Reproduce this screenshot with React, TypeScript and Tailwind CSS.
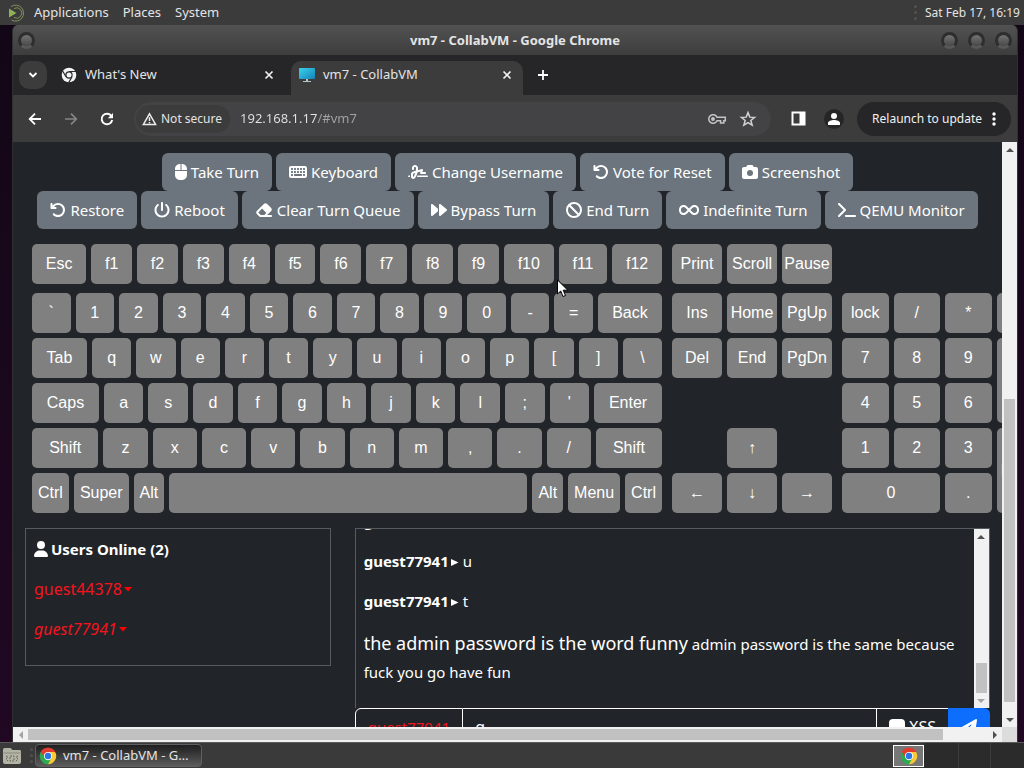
import React from "react";
import {
  FaArrowRotateLeft,
  FaBan,
  FaCamera,
  FaComputerMouse,
  FaEraser,
  FaForward,
  FaInfinity,
  FaKeyboard,
  FaPaperPlane,
  FaPowerOff,
  FaSignature,
  FaTerminal,
  FaUser,
} from "react-icons/fa6";

function MateLogo() {
  return (
    <svg width="20" height="20" viewBox="0 0 20 20" fill="none" aria-hidden="true">
      <path d="M2 5.5v9l7.5-4.5z" fill="#8fb054" />
      <path d="M4 3.6A8 8 0 1 1 4.5 17" stroke="#7f9259" strokeWidth="1" />
      <path d="M7 5.5a5.2 5.2 0 1 1 0 9" stroke="#7f9259" strokeWidth="1" />
    </svg>
  );
}

function ChromeColor() {
  return (
    <svg width="18" height="18" viewBox="0 0 48 48" aria-hidden="true">
      <path d="M24 24 4.950 13A22 22 0 0 1 43.050 13z" fill="#e33b2e" />
      <path d="M24 24 43.050 13A22 22 0 0 1 24 46z" fill="#fcc934" />
      <path d="M24 24 24 46A22 22 0 0 1 4.950 13z" fill="#2da94f" />
      <path d="M24 13H43.050L34 29.500z" fill="#fcc934" />
      <path d="M24 13H43.050A22 22 0 0 0 4.950 13L14.500 29.500A11 11 0 0 1 24 13z" fill="#e33b2e" />
      <path d="M33.500 29.500 24 46A22 22 0 0 1 4.950 13L14.500 29.500A11 11 0 0 0 33.500 29.500z" fill="#2da94f" />
      <circle cx="24" cy="24" r="11" fill="#fff" />
      <circle cx="24" cy="24" r="8.600" fill="#2b76e5" />
    </svg>
  );
}

function ChromeMono() {
  return (
    <svg width="16" height="16" viewBox="0 0 48 48" aria-hidden="true">
      <circle cx="24" cy="24" r="22" fill="#f1f3f4" />
      <circle cx="24" cy="24" r="11" fill="#29292b" />
      <circle cx="24" cy="24" r="7.500" fill="#f1f3f4" />
      <path d="M24 13.500H45M14.900 29.300 4.500 11.300M33.100 29.300 23 46.800" stroke="#29292b" strokeWidth="3.500" />
    </svg>
  );
}

function MonitorIcon() {
  return (
    <svg width="16" height="16" viewBox="0 0 16 16" aria-hidden="true">
      <defs>
        <linearGradient id="mon" x1="0" y1="0" x2="1" y2="1">
          <stop offset="0" stopColor="#3bd3ee" />
          <stop offset="1" stopColor="#1481b8" />
        </linearGradient>
      </defs>
      <rect x="0" y="1" width="16" height="11" rx="1" fill="url(#mon)" />
      <path d="M7 12h2v2h3v1H4v-1h3z" fill="#b8c4c8" />
    </svg>
  );
}

function Close() {
  return (
    <svg width="10" height="10" viewBox="0 0 10 10" aria-hidden="true">
      <path d="M1.500 1.500l7 7M8.500 1.500l-7 7" stroke="#f1f1f1" strokeWidth="1.700" />
    </svg>
  );
}

type Dir = "up" | "down" | "left" | "right";
const arrowPaths: Record<Dir, string> = {
  up: "M0 6 4 2l4 4z",
  down: "M0 2 4 6l4-4z",
  left: "M6 0 2 4l4 4z",
  right: "M2 0 6 4 2 8z",
};

function Arrow({ dir, color }: { dir: Dir; color: string }) {
  return (
    <span className="flex size-[15px] shrink-0 items-center justify-center">
      <svg width="8" height="8" viewBox="0 0 8 8" aria-hidden="true">
        <path d={arrowPaths[dir]} fill={color} />
      </svg>
    </span>
  );
}

function KeyButton({ label, className = "grow px-[5px]" }: { label: string; className?: string }) {
  return (
    <button
      aria-label={label === "" ? "Space" : undefined}
      className={`flex h-10 min-w-5 items-center justify-center rounded-[5px] bg-[#808080] text-center ${className}`}
    >
      {label}
    </button>
  );
}

const rows: string[][] = [
  ["Esc", "f1", "f2", "f3", "f4", "f5", "f6", "f7", "f8", "f9", "f10", "f11", "f12"],
  ["`", "1", "2", "3", "4", "5", "6", "7", "8", "9", "0", "-", "=", "Back"],
  ["Tab", "q", "w", "e", "r", "t", "y", "u", "i", "o", "p", "[", "]", "\\"],
  ["Caps", "a", "s", "d", "f", "g", "h", "j", "k", "l", ";", "'", "Enter"],
  ["Shift", "z", "x", "c", "v", "b", "n", "m", ",", ".", "/", "Shift"],
];

function Keyboard() {
  return (
    <div className="flex items-end gap-2.5 px-[7px] font-['Liberation_Sans',Arial,sans-serif] text-base leading-5 text-white">
      <div className="flex w-[630px] shrink-0 flex-col gap-[5px]">
        {rows.map((row, i) => (
          <div key={i} className={`flex gap-[5px] ${i === 0 ? "mb-1" : ""}`}>
            {row.map((k, j) => (
              <KeyButton key={j} label={k} className={k.length === 1 ? "w-5 grow" : "grow px-[5px]"} />
            ))}
          </div>
        ))}
        <div className="flex gap-[5px]">
          <KeyButton label="Ctrl" className="px-1.5" />
          <KeyButton label="Super" className="px-1.5" />
          <KeyButton label="Alt" className="px-1.5" />
          <KeyButton label="" className="grow" />
          <KeyButton label="Alt" className="px-1.5" />
          <KeyButton label="Menu" className="px-1.5" />
          <KeyButton label="Ctrl" className="px-1.5" />
        </div>
      </div>

      <div className="flex w-40 shrink-0 flex-col gap-[5px]">
        <div className="mb-1 grid grid-cols-3 gap-[5px]">
          <KeyButton label="Print" />
          <KeyButton label="Scroll" />
          <KeyButton label="Pause" className="" />
        </div>
        <div className="grid grid-cols-3 gap-[5px]">
          <KeyButton label="Ins" />
          <KeyButton label="Home" />
          <KeyButton label="PgUp" />
          <KeyButton label="Del" />
          <KeyButton label="End" />
          <KeyButton label="PgDn" />
        </div>
        <div className="mt-[45px] grid grid-cols-3 gap-[5px]">
          <KeyButton label="↑" className="col-start-2" />
          <KeyButton label="←" className="col-start-1" />
          <KeyButton label="↓" />
          <KeyButton label="→" />
        </div>
      </div>

      <div className="grid w-[201px] shrink-0 grid-cols-4 gap-[5px]">
        <KeyButton label="lock" />
        <KeyButton label="/" />
        <KeyButton label="*" />
        <KeyButton label="-" />
        <KeyButton label="7" />
        <KeyButton label="8" />
        <KeyButton label="9" />
        <KeyButton label="+" className="row-span-2 h-full" />
        <KeyButton label="4" />
        <KeyButton label="5" />
        <KeyButton label="6" />
        <KeyButton label="1" />
        <KeyButton label="2" />
        <KeyButton label="3" />
        <KeyButton label="Enter" className="row-span-2 h-full" />
        <KeyButton label="0" className="col-span-2" />
        <KeyButton label="." />
      </div>
    </div>
  );
}

type Action = { icon: React.ReactNode; label: string };

const actions: Action[][] = [
  [
    { icon: <FaComputerMouse className="h-4 w-3" />, label: "Take Turn" },
    { icon: <FaKeyboard className="h-4 w-[18px]" />, label: "Keyboard" },
    { icon: <FaSignature className="h-4 w-5" />, label: "Change Username" },
    { icon: <FaArrowRotateLeft className="size-4" />, label: "Vote for Reset" },
    { icon: <FaCamera className="size-4" />, label: "Screenshot" },
  ],
  [
    { icon: <FaArrowRotateLeft className="size-4" />, label: "Restore" },
    { icon: <FaPowerOff className="size-4" />, label: "Reboot" },
    { icon: <FaEraser className="h-4 w-[18px]" />, label: "Clear Turn Queue" },
    { icon: <FaForward className="size-4" />, label: "Bypass Turn" },
    { icon: <FaBan className="size-4" />, label: "End Turn" },
    { icon: <FaInfinity className="h-4 w-5" />, label: "Indefinite Turn" },
    { icon: <FaTerminal className="h-4 w-[18px]" />, label: "QEMU Monitor" },
  ],
];

function Toolbar() {
  return (
    <div className="flex flex-col">
      {actions.map((row, i) => (
        <div key={i} className="flex justify-center gap-1">
          {row.map((a) => (
            <button
              key={a.label}
              className="flex h-[38px] items-center gap-1 rounded-md bg-[#6c757d] px-[13px] text-[15px] whitespace-nowrap text-white"
            >
              {a.icon}
              {a.label}
            </button>
          ))}
        </div>
      ))}
    </div>
  );
}

function Caret() {
  return (
    <svg width="8" height="5" viewBox="0 0 8 5" aria-hidden="true">
      <path d="M0 0h8L4 4.500z" fill="#f00" />
    </svg>
  );
}

function Message({ text }: { text: string }) {
  return (
    <div className="p-2 leading-6">
      <b>guest77941</b>
      <svg className="ml-0.5 inline-block" width="8" height="10" viewBox="0 0 8 10" aria-hidden="true">
        <path d="M0 1 7.500 4.500 0 8z" fill="#fff" />
      </svg>{" "}
      {text}
    </div>
  );
}

function WindowDot() {
  return (
    <button
      aria-label="Window control"
      className="size-[17px] rounded-full border-[3px] border-[#2e2e2e] border-b-[#585858] bg-linear-to-b from-[#747474] to-[#484848]"
    />
  );
}

export default function App() {
  return (
    <div className="relative flex h-screen flex-col overflow-hidden bg-linear-to-b from-[#120716] to-[#210823] font-['Noto_Sans',sans-serif] text-[13px] text-[#e4e4e4]">
      <header className="flex h-[25px] shrink-0 items-center bg-[#3b3b3b] pr-1 pl-[7px]">
        <MateLogo />
        <nav className="ml-[7px] flex gap-3.5">
          <button>Applications</button>
          <button>Places</button>
          <button>System</button>
        </nav>
        <span className="mr-2 ml-auto flex flex-col gap-[3px]">
          <i className="size-[3px] rounded-full bg-[#525252]" />
          <i className="size-[3px] rounded-full bg-[#525252]" />
          <i className="size-[3px] rounded-full bg-[#525252]" />
        </span>
        <time className="text-xs">Sat Feb 17, 16:19</time>
      </header>

      <main className="mr-1.5 ml-3 flex min-h-0 flex-1 flex-col overflow-hidden rounded-t-md border-x border-[#303030] bg-[#3c3c3c]">
        <div className="flex h-[30px] shrink-0 items-center bg-linear-to-b from-[#525252] to-[#3d3d3d] px-[5px]">
          <div className="flex flex-1">
            <WindowDot />
          </div>
          <h1 className="pt-0.5 font-bold">vm7 - CollabVM - Google Chrome</h1>
          <div className="flex flex-1 justify-end gap-2.5">
            <WindowDot />
            <WindowDot />
            <WindowDot />
          </div>
        </div>

        <div className="flex h-10 shrink-0 bg-[#262628] pl-1.5">
          <button aria-label="Search tabs" className="mt-1.5 flex size-7 items-center justify-center rounded-[10px] bg-[#3c3c3c]">
            <svg width="10" height="10" viewBox="0 0 10 10" fill="none" aria-hidden="true">
              <path d="M1.500 3 5 6.500 8.500 3" stroke="#fff" strokeWidth="1.800" />
            </svg>
          </button>
          <div className="ml-3.5 flex w-[230px] items-center pr-[17px]">
            <ChromeMono />
            <span className="ml-2 flex-1">What's New</span>
            <button aria-label="Close What's New">
              <Close />
            </button>
          </div>
          <div className="mt-1.5 flex w-[232px] items-center rounded-t-[10px] bg-[#3c3c3c] pr-[11px] pb-1.5 pl-2">
            <MonitorIcon />
            <span className="ml-2 flex-1">vm7 - CollabVM</span>
            <button aria-label="Close vm7">
              <Close />
            </button>
          </div>
          <button aria-label="New tab" className="ml-3.5">
            <svg width="12" height="12" viewBox="0 0 12 12" aria-hidden="true">
              <path d="M6 1v10M1 6h10" stroke="#fff" strokeWidth="1.800" />
            </svg>
          </button>
        </div>

        <div className="flex h-[47px] shrink-0 items-center bg-[#3c3c3c] pr-1.5 pl-[15px]">
          <div className="flex items-center gap-[22px]">
            <button aria-label="Back">
              <svg width="14" height="14" viewBox="0 0 14 14" fill="none" aria-hidden="true">
                <path d="M13 7H2M7 1.700 1.700 7 7 12.300" stroke="#fff" strokeWidth="1.800" />
              </svg>
            </button>
            <button aria-label="Forward">
              <svg width="14" height="14" viewBox="0 0 14 14" fill="none" aria-hidden="true">
                <path d="M1 7h11M7 1.700 12.300 7 7 12.300" stroke="#858585" strokeWidth="1.700" />
              </svg>
            </button>
            <button aria-label="Reload">
              <svg width="14" height="14" viewBox="0 0 14 14" fill="none" aria-hidden="true">
                <path d="M11.500 4.200A5.300 5.300 0 1 0 12.200 8" stroke="#fff" strokeWidth="1.900" />
                <path d="M13 1v5.200H7.800z" fill="#fff" />
              </svg>
            </button>
          </div>
          <div className="ml-5 flex h-[34px] flex-1 items-center rounded-full bg-[#434345] pr-3.5 pl-0.5">
            <span className="flex h-7 items-center gap-1 rounded-full bg-[#3c3c3c] pr-2 pl-1.5 text-xs">
              <svg width="15" height="14" viewBox="0 0 15 14" fill="none" aria-hidden="true">
                <path d="M7.500 1.800 13.600 12.500H1.400z" stroke="#ececec" strokeWidth="1.500" />
                <path d="M7.500 5.300v3.800M7.500 10v1.500" stroke="#ececec" strokeWidth="1.500" />
              </svg>
              Not secure
            </span>
            <input
              aria-label="Address"
              defaultValue="192.168.1.17/#vm7"
              className="ml-2.5 min-w-0 flex-1 bg-[linear-gradient(90deg,#e4e4e4_78px,#a3a3a5_78px)] bg-clip-text text-transparent outline-none"
            />
            <button aria-label="Passwords">
              <svg width="20" height="14" viewBox="0 0 20 14" fill="none" stroke="#c4c4c6" strokeWidth="1.500" aria-hidden="true">
                <path d="M10 5.300H18.300V8.700H16.800V11H13.600V8.700H10A4.300 4.300 0 1 1 10 5.300z" />
                <circle cx="6" cy="7" r="1.200" fill="#c4c4c6" />
              </svg>
            </button>
            <button aria-label="Bookmark" className="ml-3">
              <svg width="18" height="18" viewBox="0 0 24 24" fill="none" aria-hidden="true">
                <path d="M12 3.500l2.400 6 6.400.4-5 4 1.700 6.300L12 16.700l-5.500 3.500L8.200 13.900l-5-4 6.400-.4z" stroke="#d2d2d4" strokeWidth="2" />
              </svg>
            </button>
          </div>
          <button aria-label="Side panel" className="ml-5">
            <svg width="15" height="15" viewBox="0 0 15 15" aria-hidden="true">
              <path d="M0.500 0.500h14v14h-14zM2.500 2.500v10h6v-10z" fill="#fff" fillRule="evenodd" />
            </svg>
          </button>
          <button aria-label="Profile" className="ml-[18px] flex size-5 items-center justify-center rounded-full bg-[#262626]">
            <svg width="12" height="12" viewBox="0 0 12 12" aria-hidden="true">
              <circle cx="6" cy="3" r="3" fill="#fff" />
              <path d="M0 12V10C0 8 3.500 7 6 7s6 1 6 3v2z" fill="#fff" />
            </svg>
          </button>
          <button className="ml-[13px] flex h-[34px] items-center gap-2.5 rounded-full bg-[#262628] px-[15px] text-xs whitespace-nowrap text-[#f1f1f1]">
            Relaunch to update
            <svg width="4" height="14" viewBox="0 0 4 14" fill="#fff" aria-hidden="true">
              <circle cx="2" cy="2" r="1.700" />
              <circle cx="2" cy="7" r="1.700" />
              <circle cx="2" cy="12" r="1.700" />
            </svg>
          </button>
        </div>

        <div className="flex min-h-0 flex-1">
          <div className="min-w-0 flex-1 overflow-hidden bg-[#212529] px-3 pt-[11px] text-[15px] text-white">
            <Toolbar />
            <div className="mt-[15px]">
              <Keyboard />
            </div>
            <div className="-mx-3 mt-[15px] flex items-start">
              <div className="w-1/3 px-3">
                <section className="h-[138px] border border-[#565b5f]">
                  <h2 className="flex items-center gap-[3px] p-2 leading-6 font-bold">
                    <FaUser className="h-4 w-3.5" />
                    Users Online (2)
                  </h2>
                  <ul className="px-2 text-base text-[#f5131d]">
                    <li className="flex h-10 items-center gap-0.5">
                      guest44378 <Caret />
                    </li>
                    <li className="flex h-10 items-center gap-0.5">
                      <i>guest77941</i> <Caret />
                    </li>
                  </ul>
                </section>
              </div>
              <div className="w-2/3 px-3">
                <section className="flex h-[180px] border border-b-0 border-[#565b5f]">
                  <div className="flex min-w-0 flex-1 flex-col justify-end overflow-hidden pb-3.5">
                    <Message text="admin," />
                    <Message text="u" />
                    <Message text="t" />
                    <div className="p-2 leading-7">
                      <span className="text-lg leading-7">the admin password is the word funny</span> admin password is the same because fuck
                      you go have fun
                    </div>
                  </div>
                  <div className="flex w-[15px] flex-col bg-[#f1f1f1]">
                    <Arrow dir="up" color="#505050" />
                    <div className="grow-[118]" />
                    <div className="mx-0.5 grow-[30] bg-[#c1c1c1]" />
                    <Arrow dir="down" color="#a3a3a3" />
                  </div>
                </section>
                <form className="flex h-[38px] rounded-md" onSubmit={(e) => e.preventDefault()}>
                  <label htmlFor="chat" className="flex items-center rounded-l-md border border-white px-3 text-[#f5131d]">
                    guest77941
                  </label>
                  <input
                    id="chat"
                    defaultValue="g"
                    className="min-w-0 flex-1 border-y border-white bg-[#212529] px-3 text-base outline-none"
                  />
                  <label className="flex items-center gap-1 border border-r-0 border-white px-3 text-base">
                    <input type="checkbox" className="size-4 appearance-none rounded-sm bg-white" />
                    XSS
                  </label>
                  <button aria-label="Send" className="flex items-center rounded-r-md bg-[#0d6efd] px-[13px]">
                    <FaPaperPlane className="size-4" />
                  </button>
                </form>
              </div>
            </div>
          </div>
          <div className="flex w-[15px] shrink-0 flex-col bg-[#f1f1f1]">
            <Arrow dir="up" color="#505050" />
            <div className="grow-[242]" />
            <div className="mx-0.5 grow-[303] bg-[#c1c1c1]" />
            <div className="grow-[10]" />
            <Arrow dir="down" color="#505050" />
          </div>
        </div>
        <div className="flex h-[15px] shrink-0 bg-[#f1f1f1]">
          <Arrow dir="left" color="#a3a3a3" />
          <div className="my-0.5 grow-[915] bg-[#c1c1c1]" />
          <div className="grow-[44]" />
          <Arrow dir="right" color="#505050" />
          <div className="w-[15px] bg-[#dcdcdc]" />
        </div>
      </main>

      <footer className="flex h-[26px] shrink-0 items-center border-t border-[#5a5a5a] bg-[#3a3a3a]">
        <button aria-label="Show desktop" className="ml-0.5">
          <svg width="20" height="18" viewBox="0 0 20 18" fill="none" aria-hidden="true">
            <path d="M1 2.500Q1 1 2.500 1h6l2 2h7.500q1 0 1 1.500V15q0 2-2 2H3q-2 0-2-2z" fill="#b3b3a4" />
            <path d="M1.500 6h17" stroke="#8a8a7e" />
            <path d="M8 9h4v5H8zM4 9l2 1-2 2 2 2M16 9l-2 1 2 2-2 2" stroke="#66665e" strokeDasharray="2 1" />
          </svg>
        </button>
        <span className="ml-2 flex flex-col gap-[3px]">
          <i className="size-[3px] rounded-full bg-[#505050]" />
          <i className="size-[3px] rounded-full bg-[#505050]" />
          <i className="size-[3px] rounded-full bg-[#505050]" />
        </span>
        <button className="ml-0.5 flex h-[23px] w-[167px] items-center gap-1.5 rounded-sm border border-[#606060] bg-linear-to-b from-[#1f1f1f] to-[#5c5c5c] pl-[3px]">
          <ChromeColor />
          <span className="whitespace-nowrap">vm7 - CollabVM - G…</span>
        </button>
        <div className="ml-auto flex h-full items-center">
          <button aria-label="Workspace 1" className="flex h-[22px] w-[31px] items-center justify-center border border-white bg-[#777]">
            <ChromeColor />
          </button>
          <div className="h-full w-[35px] border-r border-[#3c3c3c] bg-[#2b2b2b]" />
          <div className="h-full w-8 border-r border-[#3c3c3c] bg-[#2b2b2b]" />
          <div className="h-full w-[33px] bg-[#2b2b2b]" />
        </div>
      </footer>

      <svg className="pointer-events-none absolute top-[279px] left-[557px]" width="12" height="19" viewBox="0 0 12 19" aria-hidden="true">
        <path d="M0.500 1v14l3.200-3 2.300 5.500 2.500-1-2.300-5.300h4.600z" fill="#fff" stroke="#000" />
      </svg>
    </div>
  );
}
